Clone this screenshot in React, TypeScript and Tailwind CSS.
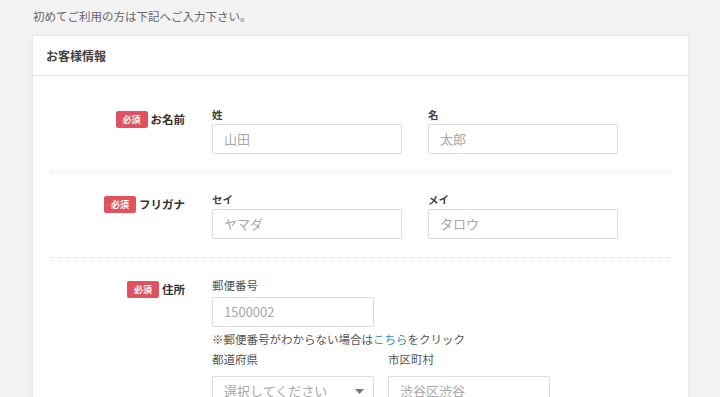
import React from "react";

const font = { fontFamily: '"Noto Sans CJK JP", "Noto Sans", sans-serif' };

function Badge() {
  return (
    <span className="inline-flex h-[17px] w-[32px] items-center justify-center rounded-[2px] bg-[#e0525e] text-[9px] font-bold leading-none text-white">
      必須
    </span>
  );
}

function RowLabel({ text }: { text: string }) {
  return (
    <div className="flex w-[135px] shrink-0 justify-end">
      <div className="mt-[3px] flex h-[19px] items-center gap-[3px]">
        <Badge />
        <span className="text-[11.5px] font-bold text-[#333]">{text}</span>
      </div>
    </div>
  );
}

function Field({ label, placeholder }: { label: string; placeholder: string }) {
  return (
    <div className="flex w-[190px] flex-col">
      <span className="h-[17px] text-[10.5px] font-bold leading-[15px] text-[#444]">{label}</span>
      <div className="flex h-[30px] items-center rounded-[2px] border border-[#dcdcdc] bg-white px-[11px] text-[13px] text-[#a8a8a8]">
        {placeholder}
      </div>
    </div>
  );
}

function Row({ label, children, last }: { label: string; children: React.ReactNode; last?: boolean }) {
  return (
    <div className={`flex pb-[18px] pt-[19px] ${last ? "" : "border-b border-dotted border-[#dedede]"}`}>
      <RowLabel text={label} />
      <div className="ml-[27px] flex-1">{children}</div>
    </div>
  );
}

export default function App() {
  return (
    <div className="min-h-screen overflow-hidden bg-[#f2f2f2] pb-[40px]" style={font}>
      <p className="pl-[33px] pt-[7px] text-[11.5px] leading-[18px] text-[#666]">
        初めてご利用の方は下記へご入力下さい。
      </p>
      <div className="ml-[33px] mt-[11px] w-[655px] bg-white shadow-[0_0_3px_rgba(0,0,0,0.1)]">
        <div className="flex h-[40px] items-center border-b border-[#e6e6e6] px-[13px]">
          <h2 className="text-[12px] font-bold text-[#444]">お客様情報</h2>
        </div>
        <div className="px-[17px] pt-[12px]">
          <Row label="お名前">
            <div className="flex gap-[26px]">
              <Field label="姓" placeholder="山田" />
              <Field label="名" placeholder="太郎" />
            </div>
          </Row>
          <Row label="フリガナ">
            <div className="flex gap-[26px]">
              <Field label="セイ" placeholder="ヤマダ" />
              <Field label="メイ" placeholder="タロウ" />
            </div>
          </Row>
          <Row label="住所" last>
            <div className="flex flex-col">
              <span className="h-[20px] text-[11.5px] leading-[16px] text-[#555]">郵便番号</span>
              <div className="flex h-[30px] w-[162px] items-center rounded-[2px] border border-[#dcdcdc] bg-white px-[11px] text-[13px] text-[#a8a8a8]">
                1500002
              </div>
              <p className="mt-[2px] text-[11.5px] leading-[20px] text-[#555]">
                ※郵便番号がわからない場合は<span className="text-[#3b86c4]">こちら</span>をクリック
              </p>
              <div className="flex gap-[14px]">
                <div className="flex w-[162px] flex-col">
                  <span className="h-[27px] pt-[1px] text-[11.5px] leading-[18px] text-[#555]">都道府県</span>
                  <div className="flex h-[30px] items-center justify-between rounded-[2px] border border-[#dcdcdc] bg-white pl-[11px] pr-[9px] text-[13px] text-[#a8a8a8]">
                    <span>選択してください</span>
                    <svg width="9" height="5" viewBox="0 0 9 5">
                      <path d="M0 0 L9 0 L4.5 5 Z" fill="#777" />
                    </svg>
                  </div>
                </div>
                <div className="flex w-[162px] flex-col">
                  <span className="h-[27px] pt-[1px] text-[11.5px] leading-[18px] text-[#555]">市区町村</span>
                  <div className="flex h-[30px] items-center rounded-[2px] border border-[#dcdcdc] bg-white px-[11px] text-[13px] text-[#a8a8a8]">
                    渋谷区渋谷
                  </div>
                </div>
              </div>
            </div>
          </Row>
        </div>
      </div>
    </div>
  );
}
